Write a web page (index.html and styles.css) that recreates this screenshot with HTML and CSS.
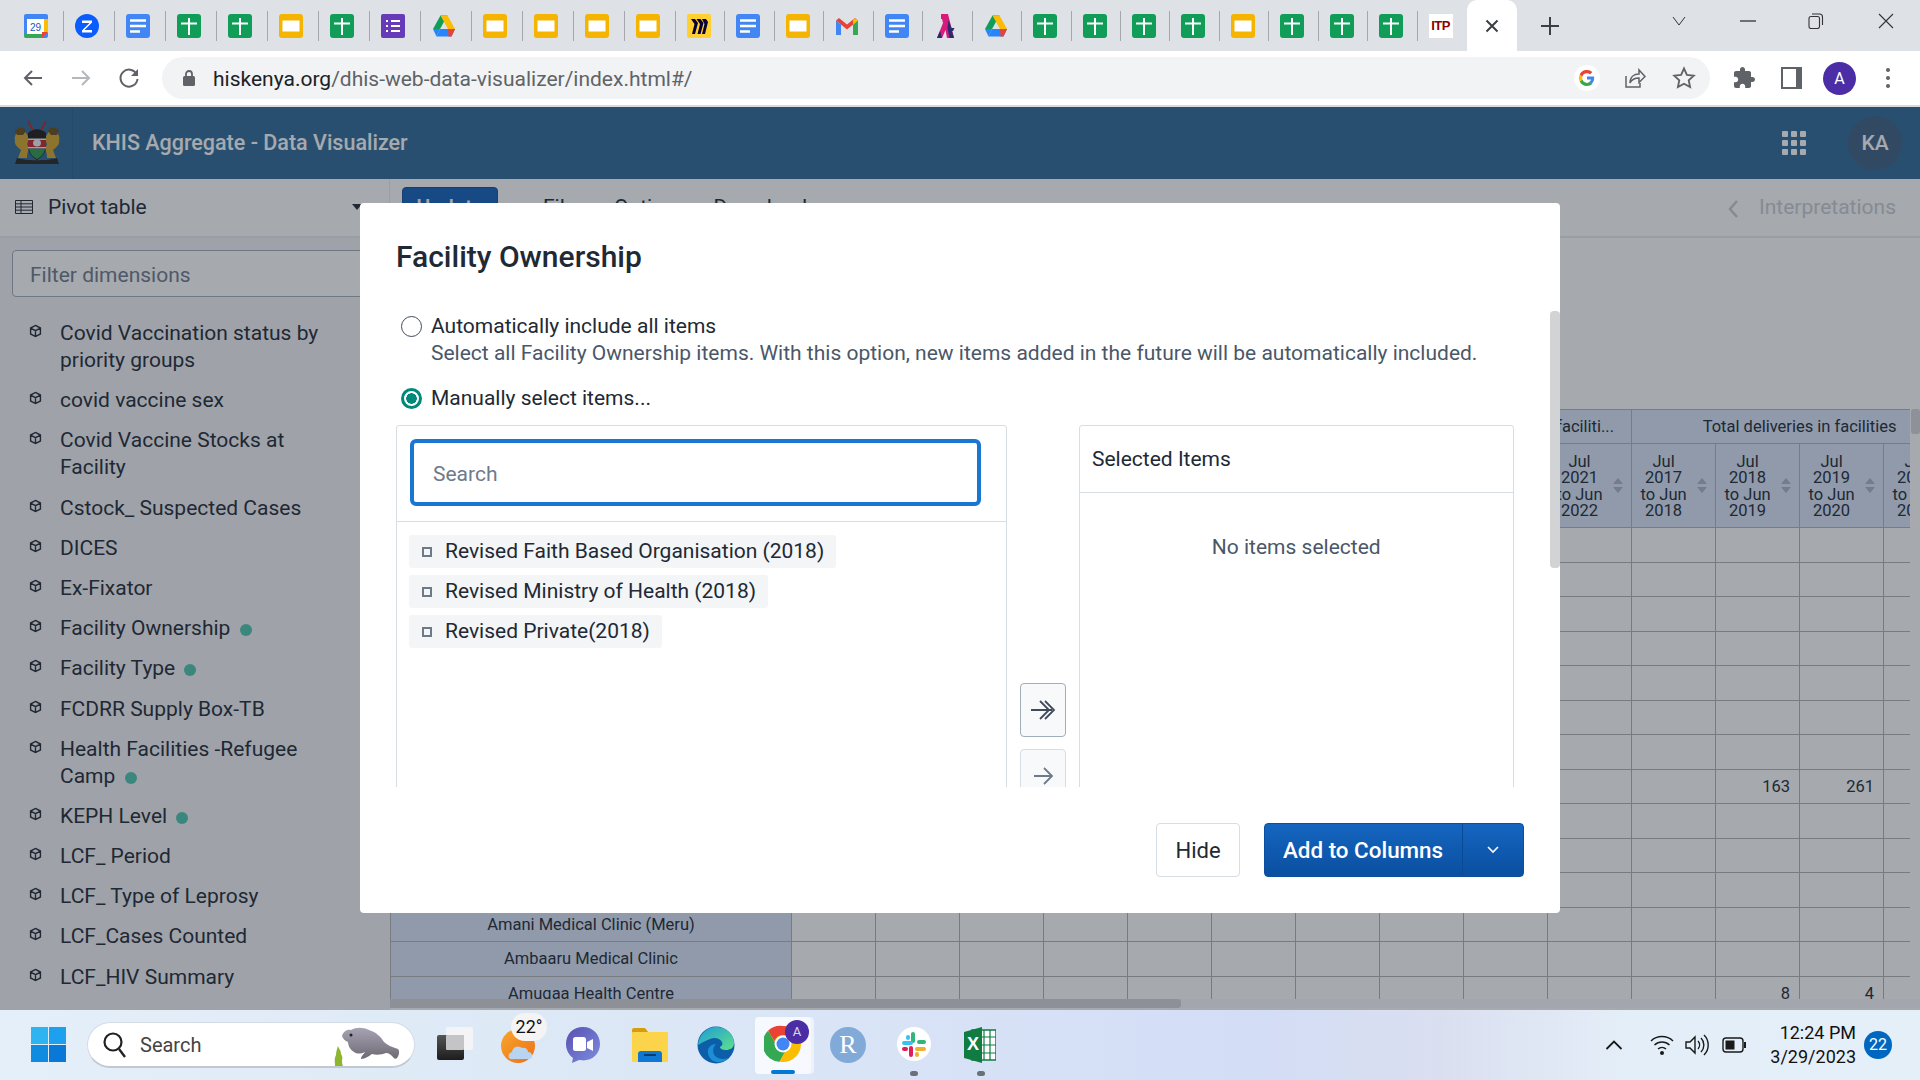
FILE: index.html
```html
<!DOCTYPE html>
<html lang="en">
<head>
  <meta charset="utf-8">
  <title>KHIS Aggregate - Data Visualizer</title>
  <link rel="stylesheet" href="styles.css">
</head>
<body>
  <!-- favicon symbols -->
  <svg class="defs" width="0" height="0">
    <defs>
      <linearGradient id="g-sun" x1="0" y1="0" x2="1" y2="1"><stop offset="0" stop-color="#f7a72c"/><stop offset="1" stop-color="#ee6f17"/></linearGradient>
      <linearGradient id="g-teams" x1="0" y1="0" x2="1" y2="1"><stop offset="0" stop-color="#5a4fb0"/><stop offset="1" stop-color="#7b8fe0"/></linearGradient>
      <linearGradient id="g-edge" x1="0" y1="0" x2="1" y2="1"><stop offset="0" stop-color="#1d9bd8"/><stop offset="1" stop-color="#5fe08a"/></linearGradient>
      <linearGradient id="g-manatee" x1="0" y1="0" x2="0" y2="1"><stop offset="0" stop-color="#a8a3b4"/><stop offset="1" stop-color="#6d6a74"/></linearGradient>
      <linearGradient id="g-task" x1="0" y1="0" x2="0" y2="1"><stop offset="0" stop-color="#555"/><stop offset="1" stop-color="#1c1c1c"/></linearGradient>
    </defs>
    <symbol id="i-sheet" viewBox="0 0 24 24"><rect width="24" height="24" rx="3" fill="#0f9d58"/><path d="M12 4v17M4 9.500h16" stroke="#fff" stroke-width="2"/></symbol>
    <symbol id="i-slide" viewBox="0 0 24 24"><rect width="24" height="24" rx="3" fill="#f4b400"/><rect x="3.500" y="6.500" width="17" height="11" fill="#fff"/></symbol>
    <symbol id="i-doc" viewBox="0 0 24 24"><rect width="24" height="24" rx="3" fill="#4285f4"/><path d="M4 6.500h16M4 12h16M4 17.500h10" stroke="#fff" stroke-width="2.400"/></symbol>
    <symbol id="i-form" viewBox="0 0 24 24"><rect width="24" height="24" rx="2" fill="#673ab7"/><path d="M5 7h2M10 7h9M5 12h2M10 12h9M5 17h2M10 17h9" stroke="#fff" stroke-width="2.200"/></symbol>
    <symbol id="i-cal" viewBox="0 0 24 24"><rect width="24" height="24" rx="2" fill="#4285f4"/><rect x="3" y="5" width="17" height="15" fill="#fff"/><path d="M0 20h18v4H3a3 3 0 0 1-3-3z" fill="#34a853"/><path d="M20 5h4v14h-4z" fill="#fbbc04"/><path d="M18 24v-6h6z" fill="#ea4335"/><text x="11.500" y="17" class="svg-cal">29</text></symbol>
    <symbol id="i-z" viewBox="0 0 24 24"><circle cx="12" cy="12" r="12" fill="#0b5cff"/><path d="M7 6.500h10v2L9.500 16H17v2.500H7v-2L14.500 9H7z" fill="#fff"/></symbol>
    <symbol id="i-drive" viewBox="0 0 24 24"><path d="M8.500 1.500h7L8 15H1z" fill="#0f9d58"/><path d="M8.500 1.500h7l7.500 13.500h-7z" fill="#fbbc04"/><path d="M1 15h7l-3.500 7.500z" fill="#2684fc"/><path d="M4.500 22.500L8 15h15l-3.500 7.500z" fill="#2684fc"/><path d="M16 15h7l-3.500 7.500h-3z" fill="#ea4335"/></symbol>
    <symbol id="i-miro" viewBox="0 0 24 24"><rect width="24" height="24" rx="2" fill="#ffd02f"/><path d="M4 5h4l3 4-3 11H5l2.500-10z" fill="#050038"/><path d="M9.500 5h4l3 4-3 11h-3l2.500-10z" fill="#050038"/><path d="M15 5h4l2 3-3 12h-3l2.500-10z" fill="#050038"/></symbol>
    <symbol id="i-gmail" viewBox="0 0 24 24"><path d="M1 6.500L4 4l8 6.500L20 4l3 2.500-11 9z" fill="#ea4335"/><path d="M1 6.500V21h5V10.500z" fill="#4285f4"/><path d="M18 10.500V21h5V6.500z" fill="#34a853"/><path d="M20 4l3 2.500-5 4V6z" fill="#fbbc04"/></symbol>
    <symbol id="i-lambda" viewBox="0 0 24 24"><path d="M7 0h7l6 24h-7l-1.500-8L8 24H3l6-15-1-4H7z" fill="#d81b7a"/><path d="M14.500 6l3 8h3l-1.500 3h-1l2 7h-4.500l-2-10zM3 24l3-7 2 7z" fill="#2a2a6e"/></symbol>
    <symbol id="i-cube" viewBox="0 0 14 14"><path d="M7 1l5.300 2.800v6.400L7 13l-5.300-2.800V3.800zM1.700 3.800L7 6.600l5.300-2.800M7 6.600V13" fill="none" stroke="#212934" stroke-width="1.500"/></symbol>
  </svg>

  <div class="browser-tabs">
    <div class="tab"><svg class="fav"><use href="#i-cal"/></svg></div>
    <div class="tab"><svg class="fav"><use href="#i-z"/></svg></div>
    <div class="tab"><svg class="fav"><use href="#i-doc"/></svg></div>
    <div class="tab"><svg class="fav"><use href="#i-sheet"/></svg></div>
    <div class="tab"><svg class="fav"><use href="#i-sheet"/></svg></div>
    <div class="tab"><svg class="fav"><use href="#i-slide"/></svg></div>
    <div class="tab"><svg class="fav"><use href="#i-sheet"/></svg></div>
    <div class="tab"><svg class="fav"><use href="#i-form"/></svg></div>
    <div class="tab"><svg class="fav"><use href="#i-drive"/></svg></div>
    <div class="tab"><svg class="fav"><use href="#i-slide"/></svg></div>
    <div class="tab"><svg class="fav"><use href="#i-slide"/></svg></div>
    <div class="tab"><svg class="fav"><use href="#i-slide"/></svg></div>
    <div class="tab"><svg class="fav"><use href="#i-slide"/></svg></div>
    <div class="tab tab-sm"><svg class="fav"><use href="#i-miro"/></svg></div>
    <div class="tab tab-sm"><svg class="fav"><use href="#i-doc"/></svg></div>
    <div class="tab tab-sm"><svg class="fav"><use href="#i-slide"/></svg></div>
    <div class="tab tab-sm"><svg class="fav"><use href="#i-gmail"/></svg></div>
    <div class="tab tab-sm"><svg class="fav"><use href="#i-doc"/></svg></div>
    <div class="tab tab-sm"><svg class="fav"><use href="#i-lambda"/></svg></div>
    <div class="tab tab-sm"><svg class="fav"><use href="#i-drive"/></svg></div>
    <div class="tab tab-sm"><svg class="fav"><use href="#i-sheet"/></svg></div>
    <div class="tab tab-sm"><svg class="fav"><use href="#i-sheet"/></svg></div>
    <div class="tab tab-sm"><svg class="fav"><use href="#i-sheet"/></svg></div>
    <div class="tab tab-sm"><svg class="fav"><use href="#i-sheet"/></svg></div>
    <div class="tab tab-sm"><svg class="fav"><use href="#i-slide"/></svg></div>
    <div class="tab tab-sm"><svg class="fav"><use href="#i-sheet"/></svg></div>
    <div class="tab tab-sm"><svg class="fav"><use href="#i-sheet"/></svg></div>
    <div class="tab tab-sm"><svg class="fav"><use href="#i-sheet"/></svg></div>
    <div class="tab tab-sm tab-last"><span class="fav-itp">ITP</span></div>
    <div class="tab-active">
      <svg width="14" height="14" viewBox="0 0 14 14"><path d="M1.500 1.500l11 11M12.500 1.500l-11 11" stroke="#3c4043" stroke-width="2"/></svg>
    </div>
    <svg class="new-tab" width="20" height="20" viewBox="0 0 20 20"><path d="M10 1v18M1 10h18" stroke="#3c4043" stroke-width="2"/></svg>
    <div class="win-controls">
      <svg width="14" height="10" viewBox="0 0 14 10"><path d="M1 1l6 8 6-8" fill="none" stroke="#333" stroke-width="1"/></svg>
      <svg width="16" height="2" viewBox="0 0 16 2"><path d="M0 1h16" stroke="#333" stroke-width="1.300"/></svg>
      <svg width="16" height="16" viewBox="0 0 16 16"><rect x="1" y="3.500" width="10.500" height="12" rx="2" fill="none" stroke="#333" stroke-width="1.100"/><path d="M4 1h7.500a3 3 0 0 1 3 3v8" fill="none" stroke="#333" stroke-width="1.100"/></svg>
      <svg width="16" height="16" viewBox="0 0 16 16"><path d="M1 1l14 14M15 1L1 15" stroke="#333" stroke-width="1.100"/></svg>
    </div>
  </div>

  <div class="browser-bar">
    <svg class="nav" width="24" height="24" viewBox="0 0 24 24"><path d="M21 12H4M11 5l-7 7 7 7" fill="none" stroke="#5f6368" stroke-width="2"/></svg>
    <svg class="nav" width="24" height="24" viewBox="0 0 24 24"><path d="M3 12h17M13 5l7 7-7 7" fill="none" stroke="#b4b7bb" stroke-width="2"/></svg>
    <svg class="nav" width="24" height="24" viewBox="0 0 24 24"><path d="M19.500 8A8.500 8.500 0 1 0 20.500 13" fill="none" stroke="#5f6368" stroke-width="2"/><path d="M21 3v7h-7z" fill="#5f6368"/></svg>
    <div class="omnibox">
      <svg class="lock" width="14" height="18" viewBox="0 0 14 18"><path d="M4 8V5a3 3 0 0 1 6 0v3" fill="none" stroke="#5f6368" stroke-width="1.800"/><rect x="1" y="7" width="12" height="10" rx="1.500" fill="#5f6368"/></svg>
      <div class="url"><span class="url-host">hiskenya.org</span>/dhis-web-data-visualizer/index.html#/</div>
      <svg class="omni-g" width="26" height="26" viewBox="0 0 26 26"><circle cx="13" cy="13" r="13" fill="#fff"/><path d="M20 11.500h-7v3h4a4.500 4.500 0 0 1-1.800 2.600l2.600 2a7.800 7.800 0 0 0 2.400-6c0-.6-.1-1.100-.2-1.600z" fill="#4285f4"/><path d="M13 21c2.200 0 4-.7 5.300-1.900l-2.600-2a4.900 4.900 0 0 1-7.300-2.600l-2.700 2.100A8 8 0 0 0 13 21z" fill="#34a853"/><path d="M8.400 14.500a4.800 4.800 0 0 1 0-3L5.700 9.400a8 8 0 0 0 0 7.200z" fill="#fbbc04"/><path d="M13 8.200c1.200 0 2.200.4 3 1.200l2.300-2.300A8 8 0 0 0 5.700 9.400l2.700 2.100A4.800 4.800 0 0 1 13 8.200z" fill="#ea4335"/></svg>
      <svg class="omni-share" width="24" height="24" viewBox="0 0 24 24"><path d="M3 10v11h14v-4" fill="none" stroke="#5f6368" stroke-width="1.500"/><path d="M7 17c0-6 4-9 9-9V4l6 6.500-6 6V12c-4 0-7 1-9 5z" fill="none" stroke="#5f6368" stroke-width="1.500"/></svg>
      <svg class="omni-star" width="24" height="24" viewBox="0 0 24 24"><path d="M12 2.500l2.900 6.300 6.900.8-5.100 4.700 1.400 6.800-6.100-3.400-6.100 3.400 1.400-6.800-5.100-4.700 6.900-.8z" fill="none" stroke="#5f6368" stroke-width="1.800"/></svg>
    </div>
    <svg class="ext-puzzle" width="24" height="24" viewBox="0 0 24 24"><path fill="#5f6368" d="M20.500 11H19V7c0-1.100-.9-2-2-2h-4V3.500C13 2.120 11.880 1 10.500 1S8 2.120 8 3.500V5H4c-1.100 0-1.990.9-1.990 2v3.800H3.500c1.490 0 2.700 1.210 2.700 2.700s-1.210 2.700-2.700 2.700H2V20c0 1.100.9 2 2 2h3.800v-1.500c0-1.490 1.210-2.700 2.700-2.700 1.490 0 2.700 1.210 2.700 2.700V22H17c1.100 0 2-.9 2-2v-4h1.500c1.380 0 2.500-1.120 2.500-2.500S21.880 11 20.500 11z"/></svg>
    <div class="side-panel"></div>
    <div class="profile">A</div>
    <svg class="kebab" width="6" height="22" viewBox="0 0 6 22"><circle cx="3" cy="3" r="2" fill="#5f6368"/><circle cx="3" cy="11" r="2" fill="#5f6368"/><circle cx="3" cy="19" r="2" fill="#5f6368"/></svg>
  </div>

  <div class="app">
    <header class="app-header">
      <div class="logo-cell">
        <svg class="arms" width="52" height="48" viewBox="0 0 52 48">
          <path d="M17 2l7 13M35 2l-7 13" stroke="#b02a2a" stroke-width="2"/>
          <path d="M5 15c3-5 8-5 10-1 3 4 3 8 1 11l2 5c-2 4-2 7-2 9H7l3-8c-4-3-7-6-6-10-1-2 0-4 1-6z" fill="#d4a72c"/>
          <path d="M47 15c-3-5-8-5-10-1-3 4-3 8-1 11l-2 5c2 4 2 7 2 9h9l-3-8c4-3 7-6 6-10 1-2 0-4-1-6z" fill="#d4a72c"/>
          <path d="M4 12c2-4 9-5 11 0l-3 4H6zM48 12c-2-4-9-5-11 0l3 4h6z" fill="#6b4c14"/>
          <path d="M17 14c6-5 12-5 18 0v13c0 7-4 11-9 14-5-3-9-7-9-14z" fill="#1c1a18"/>
          <path d="M17 20h18v8H17z" fill="#c0272d"/><path d="M17 19.500h18v1.500H17zM17 28h18v1.500H17z" fill="#f0f0f0"/>
          <path d="M18 30h16c-1 5-4 8-8 10-4-2-7-5-8-10z" fill="#2e9a4a"/>
          <ellipse cx="26" cy="24" rx="4" ry="3.500" fill="#f0f0f0"/>
          <path d="M6 39c8 3 32 3 40 0l2 6H4z" fill="#26241e"/>
        </svg>
      </div>
      <div class="app-title">KHIS Aggregate - Data Visualizer</div>
      <svg class="app-grid" width="24" height="24" viewBox="0 0 24 24" fill="#fff">
        <rect width="6" height="6" rx="1"/><rect x="9" width="6" height="6" rx="1"/><rect x="18" width="6" height="6" rx="1"/>
        <rect y="9" width="6" height="6" rx="1"/><rect x="9" y="9" width="6" height="6" rx="1"/><rect x="18" y="9" width="6" height="6" rx="1"/>
        <rect y="18" width="6" height="6" rx="1"/><rect x="9" y="18" width="6" height="6" rx="1"/><rect x="18" y="18" width="6" height="6" rx="1"/>
      </svg>
      <div class="user-badge">KA</div>
    </header>

    <div class="app-body">
      <aside class="sidebar">
        <div class="vis-type">
          <svg width="18" height="14" viewBox="0 0 18 14"><path d="M.5.500h17v13H.5zM.5 3.800h17M.5 7h17M.5 10.200h17M6 .5v13" fill="none" stroke="#212934" stroke-width="1"/></svg>
          <span>Pivot table</span>
          <svg class="vis-caret" width="10" height="6" viewBox="0 0 10 6"><path d="M0 0h10L5 6z" fill="#212934"/></svg>
        </div>
        <div class="filter-wrap"><div class="filter-input">Filter dimensions</div></div>
        <ul class="dim-list">
          <li><svg class="cube"><use href="#i-cube"/></svg><span>Covid Vaccination status by priority groups</span></li>
          <li><svg class="cube"><use href="#i-cube"/></svg><span>covid vaccine sex</span></li>
          <li><svg class="cube"><use href="#i-cube"/></svg><span>Covid Vaccine Stocks at Facility</span></li>
          <li><svg class="cube"><use href="#i-cube"/></svg><span>Cstock_ Suspected Cases</span></li>
          <li><svg class="cube"><use href="#i-cube"/></svg><span>DICES</span></li>
          <li><svg class="cube"><use href="#i-cube"/></svg><span>Ex-Fixator</span></li>
          <li><svg class="cube"><use href="#i-cube"/></svg><span>Facility Ownership <i class="dot"></i></span></li>
          <li><svg class="cube"><use href="#i-cube"/></svg><span>Facility Type <i class="dot"></i></span></li>
          <li><svg class="cube"><use href="#i-cube"/></svg><span>FCDRR Supply Box-TB</span></li>
          <li><svg class="cube"><use href="#i-cube"/></svg><span>Health Facilities -Refugee Camp <i class="dot"></i></span></li>
          <li><svg class="cube"><use href="#i-cube"/></svg><span>KEPH Level <i class="dot"></i></span></li>
          <li><svg class="cube"><use href="#i-cube"/></svg><span>LCF_ Period</span></li>
          <li><svg class="cube"><use href="#i-cube"/></svg><span>LCF_ Type of Leprosy</span></li>
          <li><svg class="cube"><use href="#i-cube"/></svg><span>LCF_Cases Counted</span></li>
          <li><svg class="cube"><use href="#i-cube"/></svg><span>LCF_HIV Summary</span></li>
        </ul>
      </aside>

      <main class="main">
        <div class="menu-bar">
          <button class="btn-update">Update</button>
          <span class="menu-item menu-file">File</span>
          <span class="menu-item menu-options">Options</span>
          <span class="menu-item menu-download">Download</span>
          <svg class="interp-caret" width="12" height="20" viewBox="0 0 12 20"><path d="M10 2L3 10l7 8" fill="none" stroke="#c8cdd3" stroke-width="2.500"/></svg>
          <span class="interp">Interpretations</span>
        </div>
        <div class="table-area">
          <div class="pivot-row">
            <div class="pivot">
              <table>
                <colgroup><col class="col-label"><col span="14" class="col-val"></colgroup>
                <tr class="hd1"><th class="corner" rowspan="2"></th><th class="span-right" colspan="10">faciliti...</th><th class="span-mid" colspan="4">Total deliveries in facilities</th></tr>
                <tr class="hd2">
                  <th><span>Jul<br>2017<br>to Jun<br>2018</span><i class="sort"></i></th>
                  <th><span>Jul<br>2018<br>to Jun<br>2019</span><i class="sort"></i></th>
                  <th><span>Jul<br>2019<br>to Jun<br>2020</span><i class="sort"></i></th>
                  <th><span>Jul<br>2020<br>to Jun<br>2021</span><i class="sort"></i></th>
                  <th><span>Jul<br>2021<br>to Jun<br>2022</span><i class="sort"></i></th>
                  <th><span>Jul<br>2017<br>to Jun<br>2018</span><i class="sort"></i></th>
                  <th><span>Jul<br>2018<br>to Jun<br>2019</span><i class="sort"></i></th>
                  <th><span>Jul<br>2019<br>to Jun<br>2020</span><i class="sort"></i></th>
                  <th><span>Jul<br>2020<br>to Jun<br>2021</span><i class="sort"></i></th>
                  <th><span>Jul<br>2021<br>to Jun<br>2022</span><i class="sort"></i></th>
                  <th><span>Jul<br>2017<br>to Jun<br>2018</span><i class="sort"></i></th>
                  <th><span>Jul<br>2018<br>to Jun<br>2019</span><i class="sort"></i></th>
                  <th><span>Jul<br>2019<br>to Jun<br>2020</span><i class="sort"></i></th>
                  <th><span>Jul<br>2020<br>to Jun<br>2021</span><i class="sort"></i></th>
                </tr>
                <tr><th></th><td></td><td></td><td></td><td></td><td></td><td></td><td></td><td></td><td></td><td></td><td></td><td></td><td></td><td></td></tr>
                <tr><th></th><td></td><td></td><td></td><td></td><td></td><td></td><td></td><td></td><td></td><td></td><td></td><td></td><td></td><td></td></tr>
                <tr><th></th><td></td><td></td><td></td><td></td><td></td><td></td><td></td><td></td><td></td><td></td><td></td><td></td><td></td><td></td></tr>
                <tr><th></th><td></td><td></td><td></td><td></td><td></td><td></td><td></td><td></td><td></td><td></td><td></td><td></td><td></td><td></td></tr>
                <tr><th></th><td></td><td></td><td></td><td></td><td></td><td></td><td></td><td></td><td></td><td></td><td></td><td></td><td></td><td></td></tr>
                <tr><th></th><td></td><td></td><td></td><td></td><td></td><td></td><td></td><td></td><td></td><td></td><td></td><td></td><td></td><td></td></tr>
                <tr><th></th><td></td><td></td><td></td><td></td><td></td><td></td><td></td><td></td><td></td><td></td><td></td><td></td><td></td><td></td></tr>
                <tr><th></th><td></td><td></td><td></td><td></td><td></td><td></td><td></td><td></td><td></td><td></td><td></td><td>163</td><td>261</td><td></td></tr>
                <tr><th></th><td></td><td></td><td></td><td></td><td></td><td></td><td></td><td></td><td></td><td></td><td></td><td></td><td></td><td></td></tr>
                <tr><th></th><td></td><td></td><td></td><td></td><td></td><td></td><td></td><td></td><td></td><td></td><td></td><td></td><td></td><td></td></tr>
                <tr><th></th><td></td><td></td><td></td><td></td><td></td><td></td><td></td><td></td><td></td><td></td><td></td><td></td><td></td><td></td></tr>
                <tr><th>Amani Medical Clinic (Meru)</th><td></td><td></td><td></td><td></td><td></td><td></td><td></td><td></td><td></td><td></td><td></td><td></td><td></td><td></td></tr>
                <tr><th>Ambaaru Medical Clinic</th><td></td><td></td><td></td><td></td><td></td><td></td><td></td><td></td><td></td><td></td><td></td><td></td><td></td><td></td></tr>
                <tr><th>Amugaa Health Centre</th><td></td><td></td><td></td><td></td><td></td><td></td><td></td><td></td><td></td><td></td><td></td><td>8</td><td>4</td><td></td></tr>
              </table>
            </div>
            <div class="vscroll"><div class="vthumb"></div></div>
          </div>
          <div class="hscroll"><div class="hthumb"></div></div>
        </div>
      </main>
    </div>

    <div class="overlay">
      <div class="modal">
        <h2 class="modal-title">Facility Ownership</h2>
        <div class="modal-scroll"></div>
        <div class="modal-body">
          <div class="radio-row">
            <span class="radio"></span>
            <div><div>Automatically include all items</div><div class="radio-help">Select all Facility Ownership items. With this option, new items added in the future will be automatically included.</div></div>
          </div>
          <div class="radio-row radio-row-2">
            <span class="radio radio-on"></span>
            <div>Manually select items...</div>
          </div>
          <div class="transfer">
            <div class="tbox tbox-left">
              <div class="search-wrap"><div class="search-input">Search</div></div>
              <div class="chips">
                <div class="chip"><i></i>Revised Faith Based Organisation (2018)</div>
                <div class="chip"><i></i>Revised Ministry of Health (2018)</div>
                <div class="chip"><i></i>Revised Private(2018)</div>
              </div>
            </div>
            <div class="t-actions">
              <button class="t-btn"><svg width="26" height="22" viewBox="0 0 26 22"><path d="M1 11h21M15 2l9 9-9 9M10 2l9 9-9 9" fill="none" stroke="#404b5a" stroke-width="1.800"/></svg></button>
              <button class="t-btn t-btn-off"><svg width="22" height="22" viewBox="0 0 22 22"><path d="M2 11h17M12 3l8 8-8 8" fill="none" stroke="#6e7a8a" stroke-width="1.800"/></svg></button>
            </div>
            <div class="tbox tbox-right">
              <div class="tbox-head">Selected Items</div>
              <div class="tbox-empty">No items selected</div>
            </div>
          </div>
        </div>
        <div class="modal-foot">
          <button class="btn-hide">Hide</button>
          <div class="split-btn">
            <span class="split-main">Add to Columns</span>
            <span class="split-arrow"><svg width="12" height="8" viewBox="0 0 12 8"><path d="M1 1l5 5 5-5" fill="none" stroke="#fff" stroke-width="1.600"/></svg></span>
          </div>
        </div>
      </div>
    </div>
  </div>

  <footer class="taskbar">
    <svg class="tb-start" width="35" height="35" viewBox="0 0 35 35">
      <rect width="17" height="17" fill="#2fb4f2"/><rect x="18" width="17" height="17" fill="#1da0ee"/><rect y="18" width="17" height="17" fill="#0f8be0"/><rect x="18" y="18" width="17" height="17" fill="#0a78d6"/>
    </svg>
    <div class="tb-search">
      <svg width="26" height="28" viewBox="0 0 26 28"><circle cx="11" cy="11" r="8.500" fill="none" stroke="#222" stroke-width="2.200"/><path d="M17 18l6 8" stroke="#222" stroke-width="2.400"/></svg>
      <span>Search</span>
      <svg class="manatee" width="68" height="40" viewBox="0 0 68 40">
        <path d="M1 40c0-5-1-7 1-11 0-3 1-6 2-9 1 3 3 4 3 8 1 2 2 3 1 6 0 2 0 4 1 6z" fill="#8db52e"/>
        <path d="M8 10c1-4 5-7 9-6 5-3 12-3 18 0 7 2 12 7 15 12 3 3 8 5 14 7 2 2 1 7-1 9-1 1-3 1-4-1-2-2-4-4-7-4-5 2-10 2-14 1-3 2-7 5-11 5 0-3 3-5 4-7-4 2-8 2-11 0-4-2-6-7-6-10-3-1-5-3-6-6z" fill="url(#g-manatee)"/>
        <circle cx="17" cy="9" r="1.500" fill="#222"/>
      </svg>
    </div>
    <svg class="tb-task" width="36" height="33" viewBox="0 0 36 33"><rect x="9" width="27" height="23" rx="2" fill="#f4f4f6"/><rect y="8" width="27" height="25" rx="2" fill="url(#g-task)"/><rect x="9" y="8" width="18" height="15" rx="1" fill="#c4c4c6"/></svg>
    <div class="tb-weather">
      <svg width="40" height="42" viewBox="0 0 40 42"><circle cx="18" cy="22" r="17" fill="url(#g-sun)"/><path d="M10 35a4 4 0 0 1 2-7 6 6 0 0 1 10-4c3-1 6 1 6 4 3 0 4 2 4 4a3 3 0 0 1-3 3z" fill="#b9d4f0"/></svg>
      <span class="tb-temp">22°</span>
    </div>
    <svg class="tb-teams" width="36" height="38" viewBox="0 0 36 38"><path d="M18 1C8 1 1 8 1 18c0 6 3 11 7 14l-1 5 7-3c1 .2 3 .4 4 .4 10 0 17-7 17-16.400S28 1 18 1z" fill="url(#g-teams)"/><rect x="8" y="11" width="13" height="14" rx="2.500" fill="#fff"/><path d="M22 16l6-3v12l-6-3z" fill="#fff"/></svg>
    <svg class="tb-folder" width="38" height="36" viewBox="0 0 38 36"><path d="M1 3a2 2 0 0 1 2-2h11l4 5h-17z" fill="#d69e0c"/><rect x="1" y="5" width="36" height="30" rx="1" fill="#fbd44b"/><path d="M7 35v-8a3 3 0 0 1 3-3h18a3 3 0 0 1 3 3v8z" fill="#0f78d4"/><path d="M13 28h12" stroke="#063c70" stroke-width="2"/></svg>
    <svg class="tb-edge" width="38" height="38" viewBox="0 0 38 38"><circle cx="19" cy="19" r="18.500" fill="#0c5ea8"/><path d="M1 19C2 8 10 1 19 1c10 0 18 7 18 16 0 5-4 7-8 7-3 0-6-1-6-3 2-1 3-3 2-5-2-4-8-5-12-3C8 15 4 17 1 19z" fill="url(#g-edge)"/><path d="M24 36c-6 1-12-2-13-9-1-5 3-9 8-9-3 3-4 8-1 12 3 3 8 4 14 2-2 2-5 3-8 4z" fill="#1a8fd6"/></svg>
    <div class="tb-chrome">
      <svg width="38" height="38" viewBox="0 0 38 38"><circle cx="19" cy="19" r="18" fill="#fbbc04"/><path d="M19 1a18 18 0 0 1 15.600 9H19a9 9 0 0 0-8.500 6L4 5.800A18 18 0 0 1 19 1z" fill="#ea4335"/><path d="M4 5.800L11.800 19a9 9 0 0 0 9 7.800l-5.500 9.900A18 18 0 0 1 4 5.800z" fill="#34a853"/><circle cx="19" cy="19" r="8.500" fill="#fff"/><circle cx="19" cy="19" r="6.500" fill="#4285f4"/></svg>
      <span class="tb-chrome-a">A</span>
      <i class="tb-bar"></i>
    </div>
    <div class="tb-r">R</div>
    <div class="tb-slack">
      <svg width="34" height="34" viewBox="0 0 34 34"><circle cx="17" cy="17" r="17" fill="#fff"/><rect x="14" y="5" width="4" height="11" rx="2" fill="#2eb67d"/><rect x="20" y="13" width="9" height="4" rx="2" fill="#2eb67d"/><rect x="5" y="14" width="11" height="4" rx="2" fill="#36c5f0"/><rect x="9" y="8" width="4" height="5" rx="2" fill="#36c5f0"/><rect x="12" y="19" width="4" height="11" rx="2" fill="#e01e5a"/><rect x="5" y="20" width="6" height="4" rx="2" fill="#e01e5a"/><rect x="18" y="20" width="11" height="4" rx="2" fill="#ecb22e"/><rect x="18" y="25" width="4" height="5" rx="2" fill="#ecb22e"/></svg>
      <i class="tb-dot"></i>
    </div>
    <div class="tb-excel">
      <svg width="32" height="36" viewBox="0 0 32 36"><rect x="8" y="3" width="24" height="30" fill="#fff" stroke="#107c41" stroke-width="1.500"/><path d="M20 3v30M8 10h24M8 18h24M8 26h24M26 3v30" stroke="#107c41" stroke-width="1.200"/><path d="M0 5l18-5v36L0 31z" fill="#107c41"/><text x="9" y="23" class="svg-x">X</text></svg>
      <i class="tb-dot"></i>
    </div>
    <div class="tray">
      <svg width="18" height="10" viewBox="0 0 18 10"><path d="M1.500 9L9 1.500 16.500 9" fill="none" stroke="#1a1a1a" stroke-width="1.800"/></svg>
      <svg class="tray-wifi" width="24" height="22" viewBox="0 0 24 22"><path d="M1 7a16 16 0 0 1 22 0M4.500 11a11 11 0 0 1 15 0M8 15a6 6 0 0 1 8 0" fill="none" stroke="#1a1a1a" stroke-width="1.500"/><circle cx="12" cy="19" r="2" fill="#1a1a1a"/></svg>
      <svg class="tray-vol" width="24" height="22" viewBox="0 0 24 22"><path d="M1 8v6h4l5 5V3L5 8z" fill="none" stroke="#1a1a1a" stroke-width="1.400"/><path d="M13 7a6 6 0 0 1 0 8M16 4a10 10 0 0 1 0 14M19 1a14 14 0 0 1 0 20" fill="none" stroke="#1a1a1a" stroke-width="1.400"/></svg>
      <svg class="tray-bat" width="24" height="16" viewBox="0 0 24 16"><rect x="1" y="1" width="20" height="14" rx="3" fill="none" stroke="#1a1a1a" stroke-width="1.400"/><rect x="3.500" y="3.500" width="9" height="9" fill="#1a1a1a"/><path d="M22 5h2v6h-2z" fill="#1a1a1a"/></svg>
      <div class="clock"><div>12:24 PM</div><div>3/29/2023</div></div>
      <span class="notif">22</span>
    </div>
  </footer>
</body>
</html>
```

FILE: styles.css
```css
* { margin: 0; padding: 0; box-sizing: border-box; }
html, body { width: 1920px; height: 1080px; overflow: hidden; }
body {
  font-family: Roboto, "Liberation Sans", sans-serif;
  color: #212934;
  background: #fff;
  display: flex;
  flex-direction: column;
}
.defs { position: absolute; }
button { font-family: inherit; }

/* browser chrome */
.browser-tabs {
  height: 51px;
  background: #dee1e6;
  display: flex;
  align-items: flex-start;
  padding-left: 13px;
  flex: none;
}
.tab {
  width: 51px;
  height: 30px;
  margin-top: 11px;
  padding-left: 11px;
  border-right: 1px solid #a4a7ab;
  display: flex;
  align-items: center;
  flex: none;
}
.tab-sm { width: 49.44px; }
.tab-last { border-right: 0; }
.fav { width: 24px; height: 24px; display: block; }
.fav-itp {
  width: 24px;
  height: 24px;
  background: #fff;
  color: #8b0000;
  font: bold 13px/24px "Liberation Sans", sans-serif;
  text-align: center;
  letter-spacing: -0.5px;
}
.tab-active {
  width: 50px;
  height: 51px;
  background: #fff;
  border-radius: 10px 10px 0 0;
  display: flex;
  align-items: center;
  justify-content: center;
  flex: none;
}
.new-tab { margin: 16px 0 0 23px; flex: none; }
.win-controls { margin-top: 13px; display: flex; align-items: center; height: 16px; margin-left: 112px; }
.win-controls svg:nth-child(2) { margin-left: 54px; }
.win-controls svg:nth-child(3) { margin-left: 52px; }
.win-controls svg:nth-child(4) { margin-left: 54px; }

.browser-bar {
  height: 56px;
  background: #fff;
  border-bottom: 2px solid #d9dadc;
  display: flex;
  align-items: center;
  padding-left: 21px;
  flex: none;
}
.nav { margin-right: 24px; flex: none; }
.omnibox {
  width: 1548px;
  height: 42px;
  margin-left: -3px;
  background: #f1f3f4;
  border-radius: 21px;
  display: flex;
  align-items: center;
  padding-left: 20px;
  flex: none;
}
.lock { flex: none; }
.url { margin-left: 17px; padding-top: 2px; font-size: 21px; color: #5f6368; width: 1361px; white-space: nowrap; }
.url-host { color: #202124; }
.omni-g { flex: none; }
.omni-share { margin-left: 23px; flex: none; }
.omni-star { margin-left: 25px; flex: none; }
.ext-puzzle { margin-left: 22px; flex: none; }
.side-panel { width: 21px; height: 22px; margin-left: 25px; border: 2px solid #5f6368; border-right-width: 6px; flex: none; }
.profile {
  width: 33px;
  height: 33px;
  margin-left: 21px;
  border-radius: 50%;
  background: #4b2ea6;
  color: #fff;
  font-size: 16px;
  line-height: 33px;
  text-align: center;
  flex: none;
}
.kebab { margin-left: 29px; flex: none; }

/* dhis2 app, dimmed by the overlay */
.app { position: relative; height: 903px; flex: none; display: flex; flex-direction: column; }
.app-header {
  height: 72px;
  background: #2d6996;
  display: flex;
  align-items: center;
  color: #fff;
  flex: none;
}
.logo-cell {
  width: 73px;
  height: 72px;
  padding: 12px 0 0 11px;
  border-right: 1px solid #28608c;
  flex: none;
}
.arms { filter: blur(0.6px); }
.app-title { margin: 0 0 2px 19px; font-size: 21.500px; font-weight: 500; width: 1690px; }
.app-grid { flex: none; }
.user-badge {
  width: 54px;
  height: 54px;
  margin-left: 42px;
  border-radius: 50%;
  background: #3f6082;
  font-size: 21px;
  font-weight: 500;
  line-height: 54px;
  text-align: center;
  flex: none;
}
.app-body { flex: 1; display: flex; min-height: 0; }
.sidebar { width: 390px; background: #f3f5f7; flex: none; overflow: hidden; }
.vis-type {
  height: 59px;
  background: #fff;
  border-bottom: 2px solid #e8edf2;
  border-right: 1px solid #e8edf2;
  display: flex;
  align-items: center;
  padding: 0 0 2px 15px;
  font-size: 21px;
}
.vis-type span { margin-left: 15px; width: 304px; }
.filter-wrap { padding: 12px 0 0 12px; }
.filter-input {
  height: 47px;
  width: 400px;
  background: #fff;
  border: 1px solid #a0adba;
  border-radius: 4px;
  padding-left: 17px;
  font-size: 21px;
  line-height: 48px;
  color: #6e7a8a;
}
.dim-list { list-style: none; padding: 23px 60px 0 29px; font-size: 21px; line-height: 27px; }
.dim-list li { display: flex; margin-bottom: 13.200px; }
.cube { width: 13px; height: 14px; margin: 4px 18px 0 0; flex: none; }
.dot {
  display: inline-block;
  width: 12px;
  height: 12px;
  margin-left: 4px;
  border-radius: 50%;
  background: #4ec6ad;
  vertical-align: -1px;
}
.main { flex: 1; min-width: 0; display: flex; flex-direction: column; }
.menu-bar {
  height: 59px;
  background: #fff;
  border-bottom: 2px solid #e8edf2;
  display: flex;
  align-items: flex-start;
  padding: 8px 0 0 12px;
  font-size: 21px;
  flex: none;
}
.btn-update {
  width: 96px;
  height: 40px;
  border: 1px solid #0e4f9b;
  border-radius: 4px;
  background: #1261bb;
  color: #fff;
  font-size: 21px;
  font-weight: 500;
}
.menu-item { line-height: 40px; }
.menu-file { margin-left: 45px; }
.menu-options { margin-left: 38px; }
.menu-download { margin-left: 27px; }
.interp-caret { margin: 12px 0 0 auto; }
.interp { margin: 0 24px 0 20px; line-height: 40px; color: #c8cdd3; }
.table-area { flex: 1; padding-top: 171px; background: #fff; min-height: 0; }
.pivot-row { display: flex; height: 590px; }
.pivot { width: 1520px; height: 590px; overflow: hidden; flex: none; }
.pivot table { width: 1577px; table-layout: fixed; border-collapse: collapse; font-size: 16.500px; color: #212934; }
.col-label { width: 401px; }
.col-val { width: 84px; }
.pivot th, .pivot td { border: 1px solid #b3b3b3; height: 34.500px; font-weight: 400; padding: 0; overflow: hidden; }
.pivot th { background: #dae6f8; text-align: center; }
.pivot td { text-align: right; padding-right: 9px; white-space: nowrap; }
.hd1 th { height: 34px; white-space: nowrap; }
.span-right { text-align: right !important; padding-right: 17px !important; }
.hd2 th { height: 84px; line-height: 16.500px; position: relative; padding-right: 20px; padding-top: 2px; }
.hd2 th span { display: block; }
/* up and down sort triangles */
.sort { position: absolute; right: 8px; top: 34px; width: 10px; height: 15px; }
.sort::before, .sort::after {
  content: "";
  position: absolute;
  left: 0;
  border-left: 5px solid transparent;
  border-right: 5px solid transparent;
}
.sort::before { top: 0; border-bottom: 6px solid #a9b4c4; }
.sort::after { bottom: 0; border-top: 6px solid #a9b4c4; }
.vscroll { width: 10px; flex: none; }
.vthumb { height: 25px; margin-left: 1px; background: #d7d8da; border-radius: 3px; }
.hscroll { height: 9px; background: #fbfbfc; }
.hthumb { width: 791px; height: 9px; background: #d6d6d8; border-radius: 0 3px 3px 0; }

/* overlay and modal */
.overlay {
  position: absolute;
  inset: 0;
  background: rgba(33, 41, 52, 0.4);
  padding: 96px 0 0 360px;
}
.modal {
  position: relative;
  width: 1200px;
  height: 710px;
  background: #fff;
  border-radius: 4px;
  display: flex;
  flex-direction: column;
}
.modal-title {
  height: 110px;
  padding: 36px 0 0 36px;
  font-size: 30px;
  line-height: 36px;
  font-weight: 500;
  flex: none;
}
.modal-scroll {
  position: absolute;
  right: 0;
  top: 108px;
  width: 10px;
  height: 257px;
  background: #d2d3d5;
  border-radius: 4px;
}
.modal-body { height: 474px; padding: 0 36px; overflow: hidden; font-size: 21px; line-height: 27px; flex: none; }
.radio-row { display: flex; padding-left: 5px; }
.radio-row-2 { margin-top: 18px; }
.radio {
  width: 21px;
  height: 21px;
  margin: 3px 9px 0 0;
  border: 1.500px solid #404b5a;
  border-radius: 50%;
  flex: none;
}
.radio-on { border: 3px solid #00897b; background: radial-gradient(circle, #00897b 0 5px, #fff 5.500px); }
.radio-help { color: #4a5768; white-space: nowrap; }
.transfer { display: flex; margin-top: 13px; align-items: flex-start; }
.tbox { height: 440px; border: 1px solid #d5dde5; border-radius: 3px; flex: none; }
.tbox-left { width: 611px; }
.tbox-right { width: 434.500px; }
.search-wrap { height: 96px; padding: 13px 25px 0 13px; border-bottom: 1px solid #d5dde5; }
.search-input {
  height: 67px;
  border: 4px solid #1976d2;
  border-radius: 6px;
  padding-left: 19px;
  line-height: 62px;
  color: #6e7a8a;
}
.chips { padding: 13px 0 0 12px; display: flex; flex-direction: column; align-items: flex-start; gap: 7px; }
.chip {
  height: 33px;
  background: #f3f5f7;
  border-radius: 3px;
  display: flex;
  align-items: center;
  padding: 0 12px 0 13px;
}
.chip i { width: 10px; height: 10px; margin-right: 13px; border: 2px solid #6e7a8a; }
.t-actions { width: 72px; padding: 258px 13px 0 12.500px; display: flex; flex-direction: column; gap: 12px; flex: none; }
.t-btn {
  width: 46px;
  height: 54px;
  background: #f8f9fa;
  border: 1px solid #a0adba;
  border-radius: 4px;
  display: flex;
  align-items: center;
  justify-content: center;
}
.t-btn-off { border-color: #d5dde5; }
.tbox-head { height: 67px; padding-left: 12px; border-bottom: 1px solid #d5dde5; line-height: 66px; }
.tbox-empty { padding-top: 41px; text-align: center; color: #4a5768; }
.modal-foot { flex: 1; display: flex; justify-content: flex-end; gap: 24px; padding: 36px 36px 0 0; }
.btn-hide {
  width: 84px;
  height: 54px;
  background: #fff;
  border: 1px solid #d5dde5;
  border-radius: 4px;
  font-size: 22px;
  color: #212934;
}
.split-btn {
  width: 260px;
  height: 54px;
  border-radius: 4px;
  background: linear-gradient(#1565c0, #0a4fa0);
  border: 1px solid #0a4fa0;
  color: #fff;
  display: flex;
  font-size: 22.400px;
  font-weight: 500;
  line-height: 52px;
}
.split-main { width: 198px; padding-left: 18px; border-right: 1px solid #0a4a94; white-space: nowrap; }
.split-arrow { flex: 1; display: flex; align-items: center; justify-content: center; }

/* windows taskbar */
.taskbar {
  height: 70px;
  background: linear-gradient(90deg, #e4eff9 0%, #dce7f6 35%, #d3ddf6 65%, #dadff0 75%, #e4eef8 85%, #e4eff8 100%);
  display: flex;
  align-items: center;
  padding-left: 31px;
  flex: none;
}
.tb-start { flex: none; margin-top: -1px; }
.tb-search {
  width: 328px;
  height: 46px;
  margin: 0 0 0 21px;
  background: #fff;
  border: 1px solid #d5dbe5;
  border-bottom: 2px solid #c2c8d2;
  border-radius: 23px;
  display: flex;
  align-items: center;
  padding-left: 14px;
  font-size: 20px;
  color: #444;
  flex: none;
}
.tb-search span { margin-left: 12px; width: 194px; }
.manatee { flex: none; margin-top: 2px; }
.tb-task { margin: 0 0 3px 22px; flex: none; }
.tb-weather { position: relative; width: 40px; height: 42px; margin-left: 27px; flex: none; }
.tb-temp {
  position: absolute;
  left: 11px;
  top: -11px;
  width: 36px;
  height: 28px;
  background: #f4f4f4;
  border-radius: 14px;
  font-size: 18px;
  line-height: 28px;
  text-align: center;
  color: #111;
}
.tb-teams { margin-left: 25px; flex: none; }
.tb-folder { margin-left: 30px; flex: none; }
.tb-edge { margin-left: 28px; flex: none; }
.tb-chrome {
  position: relative;
  width: 56px;
  height: 57px;
  margin-left: 20px;
  background: rgba(255, 255, 255, 0.75);
  border-radius: 4px;
  box-shadow: 3px 0 0 rgba(255, 255, 255, 0.5);
  padding: 8px 0 0 9px;
  flex: none;
}
.tb-chrome-a {
  position: absolute;
  left: 30px;
  top: 3px;
  width: 24px;
  height: 24px;
  border-radius: 50%;
  background: #4b2ea6;
  color: #ddd;
  font-size: 13px;
  line-height: 24px;
  text-align: center;
}
.tb-bar { position: absolute; left: 16px; bottom: 0; width: 24px; height: 4px; background: #0078d4; border-radius: 2px; }
.tb-r {
  width: 36px;
  height: 36px;
  margin-left: 19px;
  border-radius: 50%;
  background: #82aad8;
  color: #fff;
  font: 26px/36px "Liberation Serif", serif;
  text-align: center;
  flex: none;
}
.tb-slack, .tb-excel { position: relative; height: 36px; flex: none; }
.tb-slack { width: 34px; margin-left: 31px; }
.tb-excel { width: 32px; margin-left: 33px; }
.tb-dot { position: absolute; left: 13px; top: 44px; width: 8px; height: 5px; border-radius: 3px; background: #6a7078; }
.tray { margin-left: 609px; display: flex; align-items: center; flex: none; color: #111; }
.tray-wifi { margin-left: 27px; }
.tray-vol { margin-left: 11px; }
.tray-bat { margin-left: 13px; }
.clock { width: 100px; margin-left: 10px; font-size: 18px; line-height: 24px; text-align: right; white-space: nowrap; }
.notif {
  width: 28px;
  height: 28px;
  margin-left: 8px;
  border-radius: 50%;
  background: #0067c0;
  color: #fff;
  font-size: 16px;
  line-height: 28px;
  text-align: center;
}
.svg-cal { font: 10px "Liberation Sans", sans-serif; fill: #1a56c4; text-anchor: middle; }
.svg-x { font: bold 18px "Liberation Sans", sans-serif; fill: #fff; text-anchor: middle; }
```
